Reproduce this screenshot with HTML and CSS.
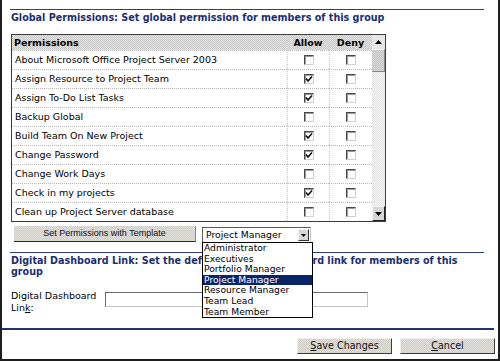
FILE: index.html
```html
<!DOCTYPE html>
<html>
<head>
<meta charset="utf-8">
<link rel="stylesheet" href="styles.css">
</head>
<body>
<div class="frame">
  <div class="rule"></div>
  <h2 class="title">Global Permissions: Set global permission for members of this group</h2>
  <div class="gridbox">
    <div class="perm">
      <div class="hd hd-name">Permissions</div><div class="hd hd-c">Allow</div><div class="hd hd-c">Deny</div>
      <div class="cell name">About Microsoft Office Project Server 2003</div><div class="cell c"><span class="cb"></span></div><div class="cell c"><span class="cb"></span></div>
      <div class="cell name">Assign Resource to Project Team</div><div class="cell c"><span class="cb on"><svg viewBox="0 0 8 8"><polyline points="1,3.5 3,6 7,1.5"/></svg></span></div><div class="cell c"><span class="cb"></span></div>
      <div class="cell name">Assign To-Do List Tasks</div><div class="cell c"><span class="cb on"><svg viewBox="0 0 8 8"><polyline points="1,3.5 3,6 7,1.5"/></svg></span></div><div class="cell c"><span class="cb"></span></div>
      <div class="cell name">Backup Global</div><div class="cell c"><span class="cb"></span></div><div class="cell c"><span class="cb"></span></div>
      <div class="cell name">Build Team On New Project</div><div class="cell c"><span class="cb on"><svg viewBox="0 0 8 8"><polyline points="1,3.5 3,6 7,1.5"/></svg></span></div><div class="cell c"><span class="cb"></span></div>
      <div class="cell name">Change Password</div><div class="cell c"><span class="cb on"><svg viewBox="0 0 8 8"><polyline points="1,3.5 3,6 7,1.5"/></svg></span></div><div class="cell c"><span class="cb"></span></div>
      <div class="cell name">Change Work Days</div><div class="cell c"><span class="cb"></span></div><div class="cell c"><span class="cb"></span></div>
      <div class="cell name">Check in my projects</div><div class="cell c"><span class="cb on"><svg viewBox="0 0 8 8"><polyline points="1,3.5 3,6 7,1.5"/></svg></span></div><div class="cell c"><span class="cb"></span></div>
      <div class="cell name">Clean up Project Server database</div><div class="cell c"><span class="cb"></span></div><div class="cell c"><span class="cb"></span></div>
    </div>
    <div class="sb">
      <div class="sb-up"><svg viewBox="0 0 7 4"><polygon points="0,4 7,4 3.5,0"/></svg></div>
      <div class="sb-thumb"></div>
      <div class="sb-track"></div>
      <div class="sb-down"><svg viewBox="0 0 7 4"><polygon points="0,0 7,0 3.5,4"/></svg></div>
    </div>
  </div>
  <div class="tools">
    <button class="tplbtn">Set Permissions with Template</button>
    <div class="selectwrap">
      <div class="select"><span>Project Manager</span><span class="sel-arrow"><svg viewBox="0 0 7 4"><polygon points="0,0 7,0 3.5,4"/></svg></span></div>
      <ul class="dropdown">
        <li>Administrator</li>
        <li>Executives</li>
        <li>Portfolio Manager</li>
        <li class="sel">Project Manager</li>
        <li>Resource Manager</li>
        <li>Team Lead</li>
        <li>Team Member</li>
      </ul>
    </div>
  </div>
  <div class="rule rule2"></div>
  <h2 class="title">Digital Dashboard Link: Set the default Digital Dashboard link for members of this group</h2>
  <div class="field">
    <label class="lbl">Digital Dashboard Lin<u>k</u>:</label>
    <div class="input"></div>
  </div>
  <div class="footrule"></div>
  <div class="actions">
    <button class="btn"><u>S</u>ave Changes</button>
    <button class="btn"><u>C</u>ancel</button>
  </div>
</div>
</body>
</html>
```

FILE: styles.css
```css
* { box-sizing: border-box; margin: 0; padding: 0; }
html, body { background: #fff; }
body {
  width: 500px;
  height: 361px;
  overflow: hidden;
  font-family: "DejaVu Sans", Verdana, sans-serif;
  color: #000;
}
.frame {
  width: 500px;
  height: 361px;
  border: 2px solid #1e1e1e;
  border-top: 0;
  padding: 9px 0 0 8px;
  display: flex;
  flex-direction: column;
  align-items: flex-start;
}
.rule {
  width: 474px;
  height: 1px;
  background: #2a3f80;
  flex: none;
}
.title {
  font-size: 9.6px;
  font-weight: bold;
  color: #1b2f70;
  line-height: 11px;
  margin: 2px 0 0 1px;
  width: 474px;
}
.gridbox {
  margin: 11px 0 0 1px;
  width: 375px;
  height: 188px;
  border: 1px solid #3c3c3c;
  display: flex;
  flex: none;
}
.perm {
  width: 360px;
  display: grid;
  grid-template-columns: 275px 42px 43px;
  grid-template-rows: 15px repeat(9, 19px);
}
.hd {
  background: repeating-conic-gradient(#c9c9c9 0 25%, #e2e2e2 0 50%) 0 0 / 2px 2px;
  font-size: 9.5px;
  font-weight: bold;
  line-height: 15px;
}
.hd-name { padding-left: 2px; }
.hd-c { text-align: center; }
.cell {
  border-top: 1px dotted #b8b8b8;
  font-size: 9.5px;
  line-height: 18px;
}
.name { padding-left: 3px; white-space: nowrap; }
.c {
  border-left: 1px dotted #c4c4c4;
  display: flex;
  align-items: center;
  justify-content: center;
}
.cb {
  width: 10px;
  height: 10px;
  background: #fff;
  border: 1px solid;
  border-color: #4a4a4a #d0d0d0 #d0d0d0 #4a4a4a;
  box-shadow: inset 1px 1px 0 #9a9a9a;
  display: block;
  position: relative;
}
.cb svg {
  position: absolute;
  left: 0;
  top: 0;
  width: 8px;
  height: 8px;
  fill: none;
  stroke: #111;
  stroke-width: 1.6;
}
.sb {
  width: 13px;
  display: flex;
  flex-direction: column;
  background: repeating-conic-gradient(#e4e4e4 0 25%, #f3f3f3 0 50%) 0 0 / 2px 2px;
}
.sb-up {
  height: 14px;
  background: #e6e6e6;
  display: flex;
  align-items: center;
  justify-content: center;
}
.sb-up svg, .sb-down svg { width: 7px; height: 4px; fill: #000; }
.sb-thumb {
  height: 23px;
  background: repeating-conic-gradient(#c4c4c4 0 25%, #dadada 0 50%) 0 0 / 2px 2px;
  border-right: 1px solid #8a8a8a;
  border-bottom: 1px solid #8a8a8a;
  border-top: 1px solid #f0f0f0;
}
.sb-track { flex: 1; }
.sb-down {
  height: 15px;
  background: #d6d6d6;
  border-top: 1px solid #f4f4f4;
  border-left: 1px solid #f4f4f4;
  border-right: 1px solid #222;
  border-bottom: 1px solid #222;
  display: flex;
  align-items: center;
  justify-content: center;
}
.tools {
  margin-top: 4px;
  height: 17px;
  display: flex;
  align-items: flex-start;
  flex: none;
}
.tplbtn {
  margin-left: 4px;
  width: 182px;
  height: 16px;
  font-family: "Liberation Sans", Arial, sans-serif;
  font-size: 9px;
  color: #111;
  background: repeating-conic-gradient(#cfcdc6 0 25%, #e2e0da 0 50%) 0 0 / 2px 2px;
  border: 0;
  border-bottom: 1px solid #2a2a2a;
  border-right: 1px solid #8a8a8a;
  line-height: 15px;
}
.selectwrap {
  position: relative;
  margin: 1px 0 0 6px;
}
.select {
  width: 109px;
  height: 16px;
  border: 1px solid;
  border-color: #5a5a5a #c8c8c8 #c8c8c8 #5a5a5a;
  background: #fff;
  font-size: 9.3px;
  line-height: 14px;
  padding-left: 3px;
  position: relative;
}
.sel-arrow {
  position: absolute;
  right: 1px;
  top: 1px;
  width: 11px;
  height: 12px;
  background: #d8d8d8;
  border: 1px solid;
  border-color: #f4f4f4 #333 #333 #f4f4f4;
  display: flex;
  align-items: center;
  justify-content: center;
}
.sel-arrow svg { width: 5px; height: 3px; fill: #000; }
.dropdown {
  position: absolute;
  left: 0;
  top: 15px;
  width: 111px;
  border: 1px solid #000;
  background: #fff;
  list-style: none;
  font-size: 9.2px;
  line-height: 10.6px;
  z-index: 5;
}
.dropdown li { padding-left: 1px; white-space: nowrap; }
.dropdown li.sel { background: #0a246a; color: #fff; }
.rule2 { margin-top: 9px; }
.field {
  margin: 13px 0 0 1px;
  display: flex;
  align-items: flex-start;
  flex: none;
}
.lbl {
  width: 94px;
  font-size: 9.5px;
  line-height: 12px;
}
.input {
  margin-top: 2px;
  width: 263px;
  height: 15px;
  border: 1px solid;
  border-color: #6a6a6a #c4c4c4 #c4c4c4 #6a6a6a;
  background: #fff;
}
.footrule {
  margin: 14px 0 0 -8px;
  width: 492px;
  height: 2px;
  background: #1f3478;
  flex: none;
}
.actions {
  margin: 8px 0 0 -8px;
  width: 498px;
  padding-right: 5px;
  display: flex;
  justify-content: flex-end;
  gap: 8px;
  flex: none;
}
.btn {
  width: 95px;
  height: 16px;
  font-family: "DejaVu Sans", Verdana, sans-serif;
  font-size: 9.6px;
  color: #111;
  background: repeating-conic-gradient(#cfcdc6 0 25%, #e2e0da 0 50%) 0 0 / 2px 2px;
  border: 1px solid;
  border-color: #eeeeee #3a3a3a #3a3a3a #eeeeee;
  line-height: 14px;
}
```
